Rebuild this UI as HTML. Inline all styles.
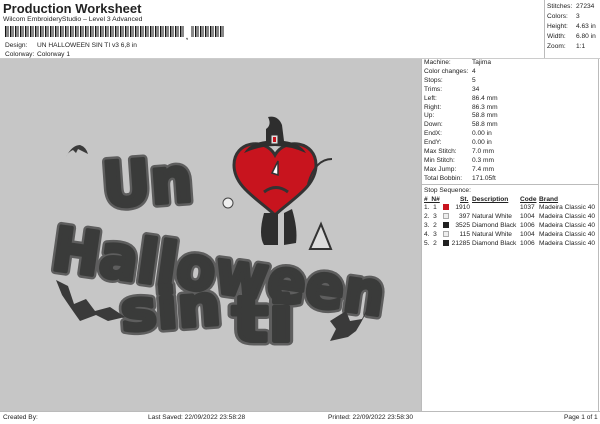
<!DOCTYPE html>
<html><head><meta charset="utf-8"><style>
*{margin:0;padding:0;box-sizing:border-box}
body{width:600px;height:424px;background:#fff;font-family:"Liberation Sans",sans-serif;color:#222;position:relative;overflow:hidden;font-size:7px}
.a{position:absolute;white-space:nowrap}
.t{position:absolute;white-space:nowrap;font-size:6.6px;line-height:9px}
</style></head><body>
<div class="a" style="left:3px;top:1px;font-size:13px;font-weight:bold">Production Worksheet</div>
<div class="a" style="left:3px;top:16px;font-size:6.8px">Wilcom EmbroideryStudio – Level 3 Advanced</div>
<svg class="a" style="left:5px;top:26px" width="220" height="14">
<defs><pattern id="bc" width="5" height="11" patternUnits="userSpaceOnUse"><rect x="0" width="1.5" height="11" fill="#111"/><rect x="2.5" width="1" height="11" fill="#111"/></pattern></defs>
<rect x="0" y="0" width="180" height="11" fill="url(#bc)"/>
<rect x="186" y="0" width="34" height="11" fill="url(#bc)"/>
<text x="181" y="13" font-size="7" font-weight="bold">,</text>
</svg>
<div class="t" style="left:5px;top:41px">Design:</div>
<div class="t" style="left:37px;top:41px">UN HALLOWEEN SIN TI v3 6,8 in</div>
<div class="t" style="left:5px;top:50px">Colorway:</div>
<div class="t" style="left:37px;top:50px">Colorway 1</div>
<div class="a" style="left:0;top:58px;width:600px;border-top:1px solid #ccc"></div>
<div class="a" style="left:544px;top:0;height:58px;border-left:1px solid #bbb"></div>
<div class="t" style="left:547px;top:2px;line-height:10px">Stitches:<br>Colors:<br>Height:<br>Width:<br>Zoom:</div>
<div class="t" style="left:576px;top:2px;line-height:10px">27234<br>3<br>4.63 in<br>6.80 in<br>1:1</div>
<div class="a" style="left:0;top:59px;width:421px;height:352px;background:#c6c6c6"></div>
<div class="a" style="left:421px;top:59px;height:352px;border-left:1px solid #bbb"></div>
<div class="a" style="left:598px;top:59px;height:352px;border-left:1px solid #bbb"></div>
<div class="t" style="left:424px;top:59px;line-height:8.9px">Machine:<br>Color changes:<br>Stops:<br>Trims:<br>Left:<br>Right:<br>Up:<br>Down:<br>EndX:<br>EndY:<br>Max Stitch:<br>Min Stitch:<br>Max Jump:<br>Total Bobbin:</div>
<div class="t" style="left:472px;top:59px;line-height:8.9px">Tajima<br>4<br>5<br>34<br>86.4 mm<br>86.3 mm<br>58.8 mm<br>58.8 mm<br>0.00 in<br>0.00 in<br>7.0 mm<br>0.3 mm<br>7.4 mm<br>171.05ft</div>
<div class="a" style="left:422px;top:184px;width:176px;border-top:1px solid #bbb"></div>
<div class="t" style="left:424px;top:186px">Stop Sequence:</div>
<div class="t" style="left:424px;top:195px;font-weight:bold;text-decoration:underline">#&nbsp; N#</div>
<div class="t" style="left:460px;top:195px;font-weight:bold;text-decoration:underline">St.</div>
<div class="t" style="left:472px;top:195px;font-weight:bold;text-decoration:underline">Description</div>
<div class="t" style="left:520px;top:195px;font-weight:bold;text-decoration:underline">Code</div>
<div class="t" style="left:539px;top:195px;font-weight:bold;text-decoration:underline">Brand</div>
<div class="t" style="left:424px;top:203px;line-height:9px">1.&nbsp; 1<br>2.&nbsp; 3<br>3.&nbsp; 2<br>4.&nbsp; 3<br>5.&nbsp; 2</div>
<div class="a" style="left:443px;top:204px;width:6px;height:6px;background:#c8141e"></div>
<div class="a" style="left:443px;top:213px;width:6px;height:6px;background:#eee;border:1px solid #aaa"></div>
<div class="a" style="left:443px;top:222px;width:6px;height:6px;background:#222"></div>
<div class="a" style="left:443px;top:231px;width:6px;height:6px;background:#eee;border:1px solid #aaa"></div>
<div class="a" style="left:443px;top:240px;width:6px;height:6px;background:#222"></div>
<div class="t" style="left:450px;top:203px;width:20px;text-align:right;line-height:9px">1910<br>397<br>3525<br>115<br>21285</div>
<div class="t" style="left:472px;top:203px;line-height:9px"><br>Natural White<br>Diamond Black<br>Natural White<br>Diamond Black</div>
<div class="t" style="left:520px;top:203px;line-height:9px">1037<br>1004<br>1006<br>1004<br>1006</div>
<div class="t" style="left:539px;top:203px;line-height:9px">Madeira Classic 40<br>Madeira Classic 40<br>Madeira Classic 40<br>Madeira Classic 40<br>Madeira Classic 40</div>
<div class="a" style="left:0;top:411px;width:600px;border-top:1px solid #bbb"></div>
<div class="t" style="left:3px;top:413px">Created By:</div>
<div class="t" style="left:148px;top:413px">Last Saved: 22/09/2022 23:58:28</div>
<div class="t" style="left:328px;top:413px">Printed: 22/09/2022 23:58:30</div>
<div class="t" style="left:564px;top:413px">Page 1 of 1</div>
<svg class="a" style="left:0;top:59px" width="421" height="352" font-family="DejaVu Sans" font-weight="bold">
<defs>
<g id="words">
<text x="104" y="148" font-size="62" textLength="90" lengthAdjust="spacingAndGlyphs" transform="rotate(-4 104 148)">Un</text>
<text x="50" y="210" font-size="60" textLength="335" lengthAdjust="spacingAndGlyphs" transform="rotate(8 50 210)">Halloween</text>
<text x="122" y="272" font-size="56" textLength="100" lengthAdjust="spacingAndGlyphs" transform="rotate(-4 122 272)">sin</text>
<text x="232" y="282" font-size="62" textLength="62" lengthAdjust="spacingAndGlyphs">ti</text>
</g>
</defs>
<use href="#words" fill="#5e5e5e" stroke="#5e5e5e" stroke-width="9" stroke-linejoin="round"/>
<use href="#words" fill="#3a3b3a" stroke="#3a3b3a" stroke-width="4" stroke-linejoin="round"/>
<g fill="#3a3a3a">
<path d="M66 98 Q72 86 80 86 Q86 88 88 95 Q82 92 78 90 L76 94 L73 91 Q68 93 66 98Z"/>
<path d="M56 221 L68 227 L74 245 L86 240 L95 252 L110 248 L125 258 L108 262 L96 256 L80 262 Q70 248 62 236Z"/>
<path d="M372 240 L362 260 L350 262 L346 252 L330 262 L336 270 L330 282 L348 278 L356 272 Q366 256 372 240Z"/>
</g>
<g transform="translate(0 -10)">
<path d="M275 106 C265 88 234 92 234 116 C234 138 258 150 275 166 C292 150 316 138 316 116 C316 92 285 88 275 106Z" fill="#c8141e" stroke="#333" stroke-width="3"/>
<path d="M244 104 Q275 90 306 104 Q300 94 284 92 L282 76 Q278 66 268 68 Q272 76 266 80 L266 92 Q250 94 244 104Z" fill="#2e2e2e"/>
<rect x="271" y="86" width="7" height="9" fill="#ddd" stroke="#333"/>
<rect x="273" y="88" width="3" height="5" fill="#c8141e"/>
<path d="M264 164 Q258 186 264 196 L278 196 L278 164Z M284 164 L284 196 L296 194 Q298 180 292 160Z" fill="#2e2e2e"/>
<path d="M272 124 L278 112 L278 126Z" fill="#fff" stroke="#333" stroke-width="1.5"/>
<path d="M264 143 Q276 134 288 143" stroke="#333" stroke-width="3" fill="none"/>
<path d="M308 135 Q315 110 332 110" stroke="#333" stroke-width="2" fill="none"/>
</g>
<path d="M321 165 L331 190 L310 190 Z" fill="#ddd" stroke="#333" stroke-width="2"/>
<circle cx="228" cy="144" r="5" fill="#eee" stroke="#444"/>
</svg>
</body></html>
